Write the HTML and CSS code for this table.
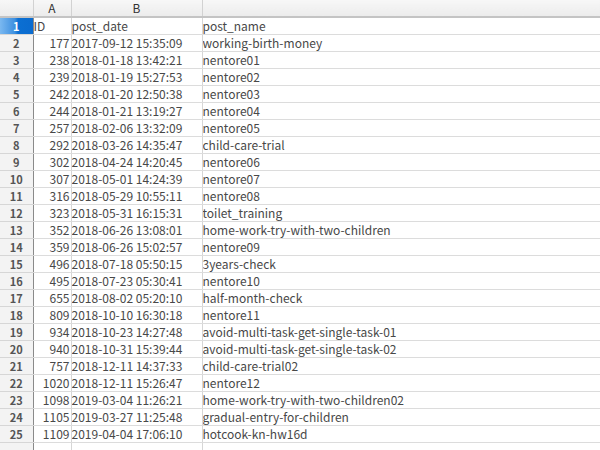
FILE: index.html
```html
<!doctype html>
<html lang="ja">

<head>
    <meta charset="UTF-8" />
    <title>posts</title>
    <link rel="stylesheet" href="styles.css">
</head>

<body>
    <table class="sheet">
        <colgroup>
            <col class="c-row">
            <col class="c-a">
            <col class="c-b">
            <col class="c-c">
        </colgroup>
        <thead>
            <tr>
                <th class="corner"></th>
                <th>A</th>
                <th>B</th>
                <th></th>
            </tr>
        </thead>
        <tbody>
            <tr><th class="sel">1</th><td>ID</td><td>post_date</td><td>post_name</td></tr>
            <tr><th>2</th><td class="num">177</td><td>2017-09-12 15:35:09</td><td>working-birth-money</td></tr>
            <tr><th>3</th><td class="num">238</td><td>2018-01-18 13:42:21</td><td>nentore01</td></tr>
            <tr><th>4</th><td class="num">239</td><td>2018-01-19 15:27:53</td><td>nentore02</td></tr>
            <tr><th>5</th><td class="num">242</td><td>2018-01-20 12:50:38</td><td>nentore03</td></tr>
            <tr><th>6</th><td class="num">244</td><td>2018-01-21 13:19:27</td><td>nentore04</td></tr>
            <tr><th>7</th><td class="num">257</td><td>2018-02-06 13:32:09</td><td>nentore05</td></tr>
            <tr><th>8</th><td class="num">292</td><td>2018-03-26 14:35:47</td><td>child-care-trial</td></tr>
            <tr><th>9</th><td class="num">302</td><td>2018-04-24 14:20:45</td><td>nentore06</td></tr>
            <tr><th>10</th><td class="num">307</td><td>2018-05-01 14:24:39</td><td>nentore07</td></tr>
            <tr><th>11</th><td class="num">316</td><td>2018-05-29 10:55:11</td><td>nentore08</td></tr>
            <tr><th>12</th><td class="num">323</td><td>2018-05-31 16:15:31</td><td>toilet_training</td></tr>
            <tr><th>13</th><td class="num">352</td><td>2018-06-26 13:08:01</td><td>home-work-try-with-two-children</td></tr>
            <tr><th>14</th><td class="num">359</td><td>2018-06-26 15:02:57</td><td>nentore09</td></tr>
            <tr><th>15</th><td class="num">496</td><td>2018-07-18 05:50:15</td><td>3years-check</td></tr>
            <tr><th>16</th><td class="num">495</td><td>2018-07-23 05:30:41</td><td>nentore10</td></tr>
            <tr><th>17</th><td class="num">655</td><td>2018-08-02 05:20:10</td><td>half-month-check</td></tr>
            <tr><th>18</th><td class="num">809</td><td>2018-10-10 16:30:18</td><td>nentore11</td></tr>
            <tr><th>19</th><td class="num">934</td><td>2018-10-23 14:27:48</td><td>avoid-multi-task-get-single-task-01</td></tr>
            <tr><th>20</th><td class="num">940</td><td>2018-10-31 15:39:44</td><td>avoid-multi-task-get-single-task-02</td></tr>
            <tr><th>21</th><td class="num">757</td><td>2018-12-11 14:37:33</td><td>child-care-trial02</td></tr>
            <tr><th>22</th><td class="num">1020</td><td>2018-12-11 15:26:47</td><td>nentore12</td></tr>
            <tr><th>23</th><td class="num">1098</td><td>2019-03-04 11:26:21</td><td>home-work-try-with-two-children02</td></tr>
            <tr><th>24</th><td class="num">1105</td><td>2019-03-27 11:25:48</td><td>gradual-entry-for-children</td></tr>
            <tr><th>25</th><td class="num">1109</td><td>2019-04-04 17:06:10</td><td>hotcook-kn-hw16d</td></tr>
            <tr><th></th><td class="num"></td><td></td><td></td></tr>
        </tbody>
    </table>
</body>

</html>
```

FILE: styles.css
```css
body {
    margin: 0;
    padding: 0;
    background: #fff;
    overflow: hidden;
    font-family: "Noto Sans CJK JP", "Noto Sans", sans-serif;
}

.sheet {
    border-collapse: collapse;
    table-layout: fixed;
    width: 600px;
    font-size: 12px;
    color: #484848;
}

.c-row { width: 33px; }
.c-a { width: 38px; }
.c-b { width: 131px; }
.c-c { width: 398px; }

.sheet thead th {
    height: 16px;
    padding: 0;
    font-weight: normal;
    color: #333;
    background: linear-gradient(#f7f7f7, #ececec);
    border-right: 1px solid #d2d2d2;
    border-bottom: 2px solid #c4c4c4;
    line-height: 16px;
}

.sheet thead th:last-child {
    border-right: none;
}

.sheet tbody th {
    height: 16px;
    padding: 0;
    font-weight: bold;
    font-size: 11px;
    color: #555;
    background: #f3f3f3;
    border-right: 1px solid #8a8a8a;
    border-bottom: 1px solid #d6d6d6;
    line-height: 16px;
    text-align: center;
}

.sheet tbody th.sel {
    color: #fff;
    background: linear-gradient(to right, #7ab8f0, #3d8fe0 45%, #0b6fd2 55%, #0a6bcf);
}

.sheet td {
    height: 16px;
    padding: 0;
    border-bottom: 1px solid #dcdcdc;
    border-right: 1px solid #d6d6d6;
    line-height: 16px;
    white-space: nowrap;
    overflow: hidden;
}

.sheet td:last-child {
    border-right: none;
}

.sheet td.num {
    text-align: right;
    padding: 0 1px 0 0;
}
```
